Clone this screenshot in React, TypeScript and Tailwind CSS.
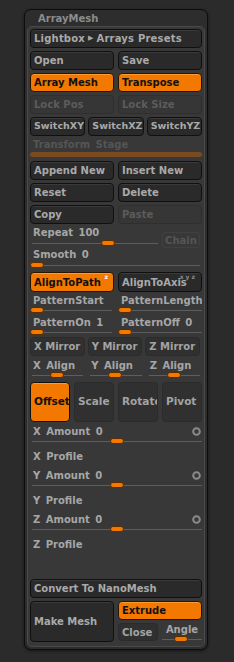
import React from 'react';

type Variant = 'dark' | 'orange' | 'off' | 'soft';

const variants: Record<Variant, string> = {
  dark: 'bg-[#2a2a2a] border-[#101010] text-[#a9a9a9] shadow-[inset_0_1px_0_#3a3a3a]',
  orange: 'bg-[#f27800] border-[#2a1500] text-[#111111] shadow-[inset_0_1px_0_#ff9a30]',
  off: 'bg-[#363636] border-[#2e2e2e] text-[#5c5c5c]',
  soft: 'bg-[#303030] border-[#2b2b2b] text-[#a3a3a3]',
};

const Btn: React.FC<{
  v?: Variant;
  className?: string;
  children: React.ReactNode;
}> = ({ v = 'dark', className = 'text-[10px]', children }) => (
  <div
    className={`relative flex items-center px-[3px] rounded-[4px] border overflow-hidden whitespace-nowrap font-bold ${variants[v]} ${className}`}
  >
    {children}
  </div>
);

// thumb offset in px from the left edge of the track
const Slider: React.FC<{ thumb: string; className?: string; h?: string }> = ({
  thumb,
  className = '',
  h = 'h-[8px]',
}) => (
  <div className={`relative ${h} ${className}`}>
    <div className="absolute left-0 right-0 top-1/2 h-px bg-[#5e5e5e]" />
    <div
      className={`absolute top-1/2 -translate-y-1/2 w-[14px] h-[6px] rounded-[3px] bg-[#f27800] border border-[#5a2c00] ${thumb}`}
    />
  </div>
);

const Label: React.FC<{ className?: string; color?: string; children: React.ReactNode }> = ({
  className = 'h-[12px]',
  color = 'text-[#a6a6a6]',
  children,
}) => (
  <div
    className={`flex items-center pl-[3px] whitespace-nowrap overflow-hidden font-bold text-[10px] [word-spacing:2px] ${color} ${className}`}
  >
    {children}
  </div>
);

const Ring = () => (
  <svg width="9" height="9" viewBox="0 0 9 9" className="mr-[1px]">
    <circle cx="4.5" cy="4.5" r="3.3" fill="none" stroke="#8a8a8a" strokeWidth="2" />
  </svg>
);

const AmountRow: React.FC<{ axis: string }> = ({ axis }) => (
  <>
    <div className="flex items-center justify-between">
      <Label>{axis} Amount 0</Label>
      <Ring />
    </div>
    <Slider thumb="left-[78px]" className="ml-[2px]" />
  </>
);

export default function App() {
  return (
    <div
      className="min-h-[662px] w-[234px] bg-[#2b2b2b] pt-[9px] pb-[8px]"
      style={{ fontFamily: '"DejaVu Sans", Verdana, sans-serif' }}
    >
      <div className="ml-[24px] w-[184px] rounded-[7px] border border-[#0d0d0d] bg-[#2d2d2d] shadow-[0_1px_3px_#151515]">
        <div className="h-[16px] pl-[13px] flex items-center font-bold text-[10px] text-[#8c8c8c]">
          ArrayMesh
        </div>
        <div className="mx-[2px] mb-[2px] rounded-[5px] border border-[#4a4a4a] bg-[#383838] px-[2px] pt-[2px] pb-[3px] flex flex-col">
          <Btn className="h-[19px] text-[10px] tracking-[0.2px]">
            Lightbox
            <span className="mx-[3px] text-[7px]">▶</span>
            Arrays Presets
          </Btn>

          <div className="mt-[3px] grid grid-cols-2 gap-[4px]">
            <Btn className="h-[19px] text-[10px]">Open</Btn>
            <Btn className="h-[19px] text-[10px]">Save</Btn>
          </div>
          <div className="mt-[3px] grid grid-cols-2 gap-[4px]">
            <Btn v="orange" className="h-[19px] text-[10px]">Array Mesh</Btn>
            <Btn v="orange" className="h-[19px] text-[10px]">Transpose</Btn>
          </div>
          <div className="mt-[3px] grid grid-cols-2 gap-[4px]">
            <Btn v="off" className="h-[19px] text-[10px]">Lock Pos</Btn>
            <Btn v="off" className="h-[19px] text-[10px]">Lock Size</Btn>
          </div>
          <div className="mt-[3px] grid grid-cols-3 gap-[3px]">
            <Btn className="h-[19px] text-[9.5px] px-[2px]">SwitchXY</Btn>
            <Btn className="h-[19px] text-[9.5px] px-[2px]">SwitchXZ</Btn>
            <Btn className="h-[19px] text-[9.5px] px-[2px]">SwitchYZ</Btn>
          </div>

          <Label className="mt-[2px] h-[13px]" color="text-[#555555]">
            Transform Stage
          </Label>
          <div className="mt-[1px] h-[5px] rounded-[3px] bg-[#7a4a20]" />

          <div className="mt-[4px] grid grid-cols-2 gap-[4px]">
            <Btn className="h-[19px] text-[10px]">Append New</Btn>
            <Btn className="h-[19px] text-[10px]">Insert New</Btn>
          </div>
          <div className="mt-[3px] grid grid-cols-2 gap-[4px]">
            <Btn className="h-[19px] text-[10px]">Reset</Btn>
            <Btn className="h-[19px] text-[10px]">Delete</Btn>
          </div>
          <div className="mt-[3px] grid grid-cols-2 gap-[4px]">
            <Btn className="h-[19px] text-[10px]">Copy</Btn>
            <Btn v="off" className="h-[19px] text-[10px]">Paste</Btn>
          </div>

          <div className="mt-[2px] flex justify-between">
            <div className="w-[128px]">
              <Label className="h-[13px]">Repeat 100</Label>
              <Slider thumb="left-[69px]" className="ml-[2px]" />
            </div>
            <div className="mt-[6px] mr-[2px] h-[16px] w-[38px] rounded-[3px] border border-[#404040] flex items-center justify-center font-bold text-[10px] text-[#555555]">
              Chain
            </div>
          </div>

          <Label className="h-[13px]">Smooth 0</Label>
          <Slider thumb="left-0" className="mr-[2px]" />

          <div className="mt-[3px] grid grid-cols-2 gap-[4px]">
            <Btn v="orange" className="h-[20px] text-[10px]">
              AlignToPath
              <span className="absolute right-[5px] top-[1px] text-[6px] leading-none text-white">z</span>
            </Btn>
            <Btn className="h-[20px] text-[10px]">
              AlignToAxis
              <span className="absolute right-[4px] top-[1px] text-[6px] leading-none text-[#8a8a8a] tracking-[2px]">
                xyz
              </span>
            </Btn>
          </div>

          <div className="mt-[2px] grid grid-cols-2 gap-[4px]">
            <div>
              <Label>PatternStart</Label>
              <Slider h="h-[7px]" thumb="left-0" className="mr-[2px]" />
            </div>
            <div>
              <Label>PatternLength</Label>
              <Slider h="h-[7px]" thumb="left-0" />
            </div>
          </div>
          <div className="mt-[3px] grid grid-cols-2 gap-[4px]">
            <div>
              <Label>PatternOn 1</Label>
              <Slider h="h-[7px]" thumb="left-0" className="mr-[2px]" />
            </div>
            <div>
              <Label>PatternOff 0</Label>
              <Slider h="h-[7px]" thumb="left-0" />
            </div>
          </div>

          <div className="mt-[2px] grid grid-cols-3 gap-[3px] pr-[2px]">
            <Btn v="soft" className="h-[19px] text-[10px]">X Mirror</Btn>
            <Btn v="soft" className="h-[19px] text-[10px]">Y Mirror</Btn>
            <Btn v="soft" className="h-[19px] text-[10px]">Z Mirror</Btn>
          </div>

          <div className="mt-[3px] grid grid-cols-3 gap-[5px] pr-[2px]">
            {['X', 'Y', 'Z'].map((a) => (
              <div key={a}>
                <Label>{a} Align</Label>
                <Slider thumb="left-[18px]" className="ml-[2px]" />
              </div>
            ))}
          </div>

          <div className="mt-[3px] grid grid-cols-4 gap-[4px]">
            <Btn v="orange" className="h-[40px] border-[#111] text-[10.5px]">Offset</Btn>
            <Btn v="soft" className="h-[40px] text-[10.5px]">Scale</Btn>
            <Btn v="soft" className="h-[40px] text-[10.5px]">Rotate</Btn>
            <Btn v="soft" className="h-[40px] text-[10.5px]">Pivot</Btn>
          </div>

          <div className="mt-[3px]">
            <AmountRow axis="X" />
          </div>
          <Label className="mt-[5px] h-[12px]">X Profile</Label>
          <div className="mt-[7px]">
            <AmountRow axis="Y" />
          </div>
          <Label className="mt-[5px] h-[12px]">Y Profile</Label>
          <div className="mt-[7px]">
            <AmountRow axis="Z" />
          </div>
          <Label className="mt-[5px] h-[12px]">Z Profile</Label>

          <Btn className="mt-[29px] h-[19px] text-[10px]">Convert To NanoMesh</Btn>

          <div className="mt-[3px] grid grid-cols-2 gap-[4px]">
            <Btn className="h-[41px] text-[10px]">Make Mesh</Btn>
            <div className="flex flex-col">
              <Btn v="orange" className="h-[19px] text-[10px]">Extrude</Btn>
              <div className="mt-[3px] flex gap-[4px]">
                <Btn v="soft" className="h-[18px] w-[40px] text-[10px]">Close</Btn>
                <div className="w-[40px]">
                  <div className="h-[12px] flex items-center justify-center font-bold text-[10px] text-[#a6a6a6]">
                    Angle
                  </div>
                  <Slider thumb="left-[12px]" />
                </div>
              </div>
            </div>
          </div>
        </div>
      </div>
    </div>
  );
}
